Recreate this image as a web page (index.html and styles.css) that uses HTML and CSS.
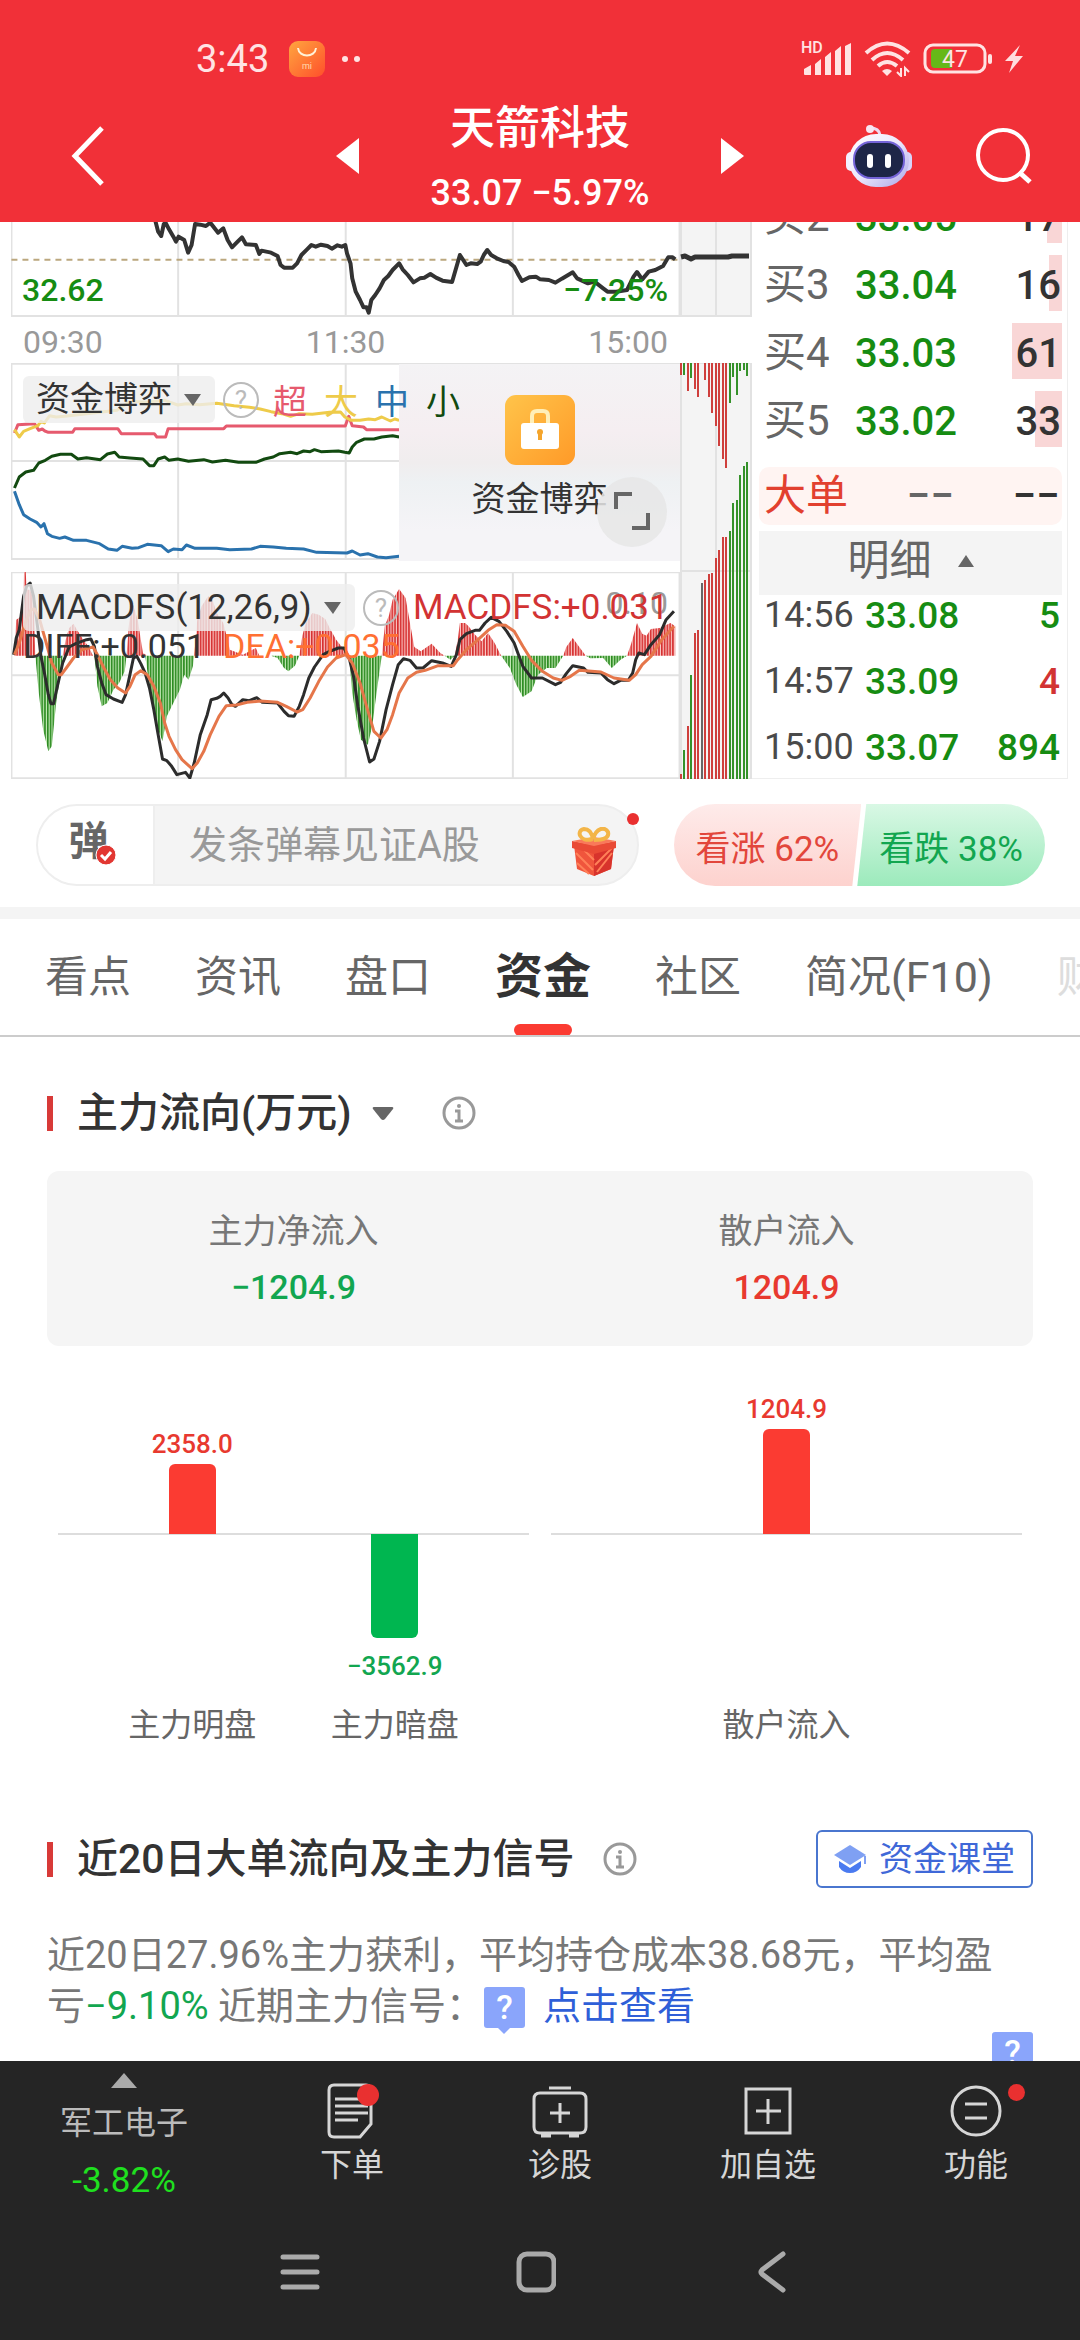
FILE: index.html
```html
<!DOCTYPE html>
<html lang="zh-CN">

<head>
    <meta charset="UTF-8">
    <meta name="viewport" content="width=device-width, initial-scale=1.0">
    <title>天箭科技 33.07</title>
    <link rel="stylesheet" href="styles.css">
</head>

<body>
    <!-- Header Section -->
    <header class="top">
        <div class="status-bar">
            <div class="status-left">
                <span class="clock">3:43</span>
                <svg class="app-icon" width="36" height="36" viewBox="0 0 36 36">
                    <defs>
                        <linearGradient id="mi" x1="0" y1="0" x2="1" y2="1">
                            <stop offset="0" stop-color="#ffa63f" />
                            <stop offset="1" stop-color="#ff4f2b" />
                        </linearGradient>
                    </defs>
                    <rect width="36" height="36" rx="9" fill="url(#mi)" />
                    <path d="M9 7c1 10 17 10 18 0" fill="none" stroke="#fff2d8" stroke-width="2" />
                    <text x="18" y="28" text-anchor="middle" font-size="9" fill="#ffdcae">mi</text>
                </svg>
                <svg width="20" height="8" viewBox="0 0 20 8" fill="#ffe3e3">
                    <circle cx="4" cy="4" r="3" />
                    <circle cx="16" cy="4" r="3" />
                </svg>
            </div>
            <div class="status-right">
                <div class="signal">
                    <span class="hd">HD</span>
                    <svg width="50" height="34" viewBox="0 0 50 34" fill="#ffe3e3">
                        <path d="M1 27l7-4v10H2q-1 0-1-1zM12 22l6-5v16h-6zM22 15l6-5v23h-6zM32 9l6-5v29h-6zM42 4l6-3v32h-6z" />
                    </svg>
                </div>
                <svg width="48" height="36" viewBox="0 0 48 36" fill="none" stroke="#ffe3e3" stroke-width="4">
                    <path d="M2 12Q23-7 45 12M8 19Q23 5 39 19M14 25Q23 17 33 25" />
                    <path d="M18 30q5-4 10 0l-5 5z" fill="#ffe3e3" stroke="none" />
                    <path d="M37 27v8l-4-4M41 35v-8l4 4" stroke-width="2" />
                </svg>
                <svg width="70" height="32" viewBox="0 0 70 32">
                    <rect x="2" y="2" width="60" height="27" rx="8" fill="none" stroke="#ffe3e3" stroke-width="3" />
                    <path d="M12 6h17v19H12q-4 0-4-4V10q0-4 4-4z" fill="#66b818" />
                    <rect x="65" y="11" width="4" height="10" rx="2" fill="#ffe3e3" />
                    <text x="32" y="24" text-anchor="middle" font-size="23" fill="#ffe3e3">47</text>
                </svg>
                <svg width="20" height="30" viewBox="0 0 20 30">
                    <path d="M16 1L1 17h8L5 29 19 12h-8z" fill="#ffdede" />
                </svg>
            </div>
        </div>
        <div class="title-bar">
            <button class="icon-btn back" aria-label="返回">
                <svg width="36" height="62" viewBox="0 0 36 62"><path d="M32 3L5 31l27 28" fill="none" stroke="#fff" stroke-width="5" /></svg>
            </button>
            <div class="stock">
                <button class="icon-btn" aria-label="上一只">
                    <svg width="23" height="36" viewBox="0 0 23 36"><path d="M23 0v36L0 18z" fill="#fff" /></svg>
                </button>
                <div class="stock-name">
                    <h1>天箭科技</h1>
                    <p>33.07 −5.97%</p>
                </div>
                <button class="icon-btn" aria-label="下一只">
                    <svg width="23" height="36" viewBox="0 0 23 36"><path d="M0 0v36l23-18z" fill="#fff" /></svg>
                </button>
            </div>
            <div class="title-tools">
                <button class="icon-btn" aria-label="智能助手">
                    <svg width="66" height="64" viewBox="0 0 66 64">
                        <defs>
                            <linearGradient id="shell" x1="0" y1="0" x2="1" y2="1">
                                <stop offset="0" stop-color="#ffffff" />
                                <stop offset="0.500" stop-color="#ece7fc" />
                                <stop offset="1" stop-color="#a9a6e8" />
                            </linearGradient>
                        </defs>
                        <path d="M24 4q9 0 10 7" fill="none" stroke="#efd9f0" stroke-width="3" />
                        <circle cx="24" cy="5" r="4" fill="#f7e6f2" />
                        <rect x="0" y="28" width="10" height="19" rx="5" fill="#f2f0ff" />
                        <rect x="56" y="28" width="10" height="19" rx="5" fill="#d8d5fa" />
                        <rect x="3" y="10" width="60" height="53" rx="27" fill="url(#shell)" />
                        <rect x="8" y="18" width="50" height="36" rx="17" fill="#1d2647" stroke="#7464d8" stroke-width="2" />
                        <rect x="21" y="30" width="6" height="14" rx="3" fill="#fff" />
                        <rect x="39" y="30" width="6" height="14" rx="3" fill="#fff" />
                    </svg>
                </button>
                <button class="icon-btn" aria-label="搜索">
                    <svg width="56" height="56" viewBox="0 0 56 56" fill="none" stroke="#fff" stroke-width="4">
                        <circle cx="27" cy="27" r="25" />
                        <path d="M43 44l11 10" stroke-width="5" />
                    </svg>
                </button>
            </div>
        </div>
    </header>

    <main class="content">
        <!-- Quote Section -->
        <section class="quote">
            <div class="charts">
                <div class="pane pane-price">
                    <svg class="plot" viewBox="26 6 1541 285" preserveAspectRatio="none">
                        <path class="grid" d="M27 0V288H1566V0M411 0V288M797 0V288M1182 0V288" />
                        <path class="ref-line" d="M27 119H1566" />
                        <path class="line line-price" d="M358 0L365 35 372 48 378 12 382 8 390 28 400 50 406 65 412 50 425 60 434 98 442 75 450 12 462 14 475 18 485 8 495 25 503 38 515 25 525 60 535 82 548 65 558 52 567 73 590 75 598 102 603 92 625 98 640 108 647 135 655 143 675 143 685 130 695 105 708 88 718 75 728 80 740 74 755 78 765 86 778 76 788 80 796 75 800 100 808 130 812 175 820 215 830 240 838 262 845 262 850 278 856 240 865 225 875 205 885 180 895 168 905 150 920 130 928 148 940 165 953 187 968 175 978 173 992 162 1005 173 1020 182 1042 186 1050 150 1060 105 1075 135 1085 130 1100 132 1108 125 1115 105 1123 90 1132 105 1145 115 1160 123 1172 126 1185 140 1195 165 1203 183 1220 172 1235 170 1245 178 1265 180 1280 188 1295 176 1320 157 1330 175 1355 190 1370 185 1390 205 1400 215 1420 215 1445 210 1460 170 1468 156 1480 178 1495 155 1510 150 1528 138 1540 112 1550 112 1556 118" />
                    </svg>
                    <div class="price-range"><span>32.62</span><span>−7.25%</span></div>
                </div>
                <div class="time-axis"><span>09:30</span><span>11:30</span><span>15:00</span></div>
                <div class="pane pane-game">
                    <svg class="plot" viewBox="26 430 1541 591" preserveAspectRatio="none">
                        <path class="grid" d="M27 432H1566V1018H27ZM411 430V1018M797 430V1018M27 724H920" />
                        <path class="line line-xl" d="M34 640L42 615 80 612 90 632 98 628 104 634 112 638 168 638 173 627 272 627 280 642 356 642 362 652 382 652 388 627 516 627 522 619 796 619 804 590 812 618 838 622 845 630 920 630" />
                        <path class="line line-l" d="M34 630L45 652 55 635 70 627 88 618 95 605 103 610 115 588 130 592 150 590 200 582 270 572 300 545 340 548 380 542 410 556 430 552 460 555 500 551 540 558 575 563 600 568 625 576 650 582 670 590 690 582 720 584 760 578 785 577 795 592 810 602 830 602 850 598 865 600 880 592 900 604 910 598 920 602" />
                        <path class="line line-s" d="M34 805L45 772 60 757 78 752 90 730 105 722 120 710 140 704 165 704 180 718 200 714 232 720 248 703 265 698 275 712 300 715 330 718 345 738 355 738 365 718 380 712 390 722 410 718 435 725 470 720 490 727 520 722 550 728 590 728 610 718 630 712 645 702 670 698 685 702 700 694 715 696 725 690 740 696 780 694 795 698 805 700 812 682 822 668 840 658 862 658 880 652 905 648 920 652" />
                        <path class="line line-m" d="M34 815L45 855 55 885 70 898 85 908 95 922 102 912 110 942 120 950 138 956 150 952 170 962 200 962 230 972 250 988 270 992 282 980 305 986 320 984 340 974 372 978 388 996 400 988 420 990 430 976 450 986 500 986 530 990 580 988 600 980 630 982 660 986 700 988 730 998 800 1000 812 994 830 1006 848 1002 870 1012 890 1014 920 1010" />
                    </svg>
                    <div class="locked">
                        <svg width="70" height="70" viewBox="0 0 70 70">
                            <defs>
                                <linearGradient id="lock" x1="0" y1="0" x2="1" y2="1">
                                    <stop offset="0" stop-color="#ffc44a" />
                                    <stop offset="1" stop-color="#ff9a28" />
                                </linearGradient>
                            </defs>
                            <rect width="70" height="70" rx="11" fill="url(#lock)" />
                            <path d="M27 28v-7q0-5 5-5h6q5 0 5 5v7" fill="none" stroke="#ffefb8" stroke-width="4" />
                            <rect x="16" y="28" width="38" height="26" rx="3" fill="#fff" />
                            <circle cx="35" cy="37" r="3" fill="#f5a52c" />
                            <path d="M33 37h4v8h-4z" fill="#f5a52c" />
                        </svg>
                        <span>资金博弈</span>
                    </div>
                    <div class="legend">
                        <label class="picker">
                            <select aria-label="指标"><option>资金博弈</option></select>
                            <svg width="17" height="12" viewBox="0 0 17 12"><path d="M0 0h17L9 12z" fill="#666" /></svg>
                        </label>
                        <button class="help" aria-label="说明">?</button>
                        <span class="xl">超</span><span class="l">大</span><span class="m">中</span><span class="s">小</span>
                    </div>
                    <button class="expand" aria-label="全屏">
                        <svg width="36" height="46" viewBox="0 0 36 46" fill="none" stroke="#666" stroke-width="4"><path d="M2 20V5h16M34 24v15H18" /></svg>
                    </button>
                </div>
                <div class="pane pane-macd">
                    <svg class="plot" viewBox="26 37 1541 621" preserveAspectRatio="none">
                        <defs>
                            <pattern id="up" width="6.400" height="700" patternUnits="userSpaceOnUse">
                                <rect width="6.400" height="700" fill="#fbc9c6" /><rect width="3.800" height="700" fill="#d62f2f" />
                            </pattern>
                            <pattern id="down" width="6.400" height="700" patternUnits="userSpaceOnUse">
                                <rect width="6.400" height="700" fill="#c4eab6" /><rect width="3.800" height="700" fill="#2b8a20" />
                            </pattern>
                        </defs>
                        <path class="grid" d="M27 38H1566V656H27ZM411 37V656M797 37V656M1182 37V656M27 347H1566" />
                        <path fill="url(#up)" d="M34 288L38 180 50 170 55 120 56 37H60L62 90 70 90 78 120 82 288ZM145 288L152 240 160 205 170 192 178 210 190 235 205 262 215 288ZM292 288L298 190 306 130 318 180 325 240 330 280 340 288ZM448 288L455 180 465 140 480 110 490 120 500 160 515 190 525 240 530 270 560 285 590 265 598 288ZM690 288L697 228 705 190 720 160 735 165 750 178 760 205 775 240 790 265 800 288ZM880 288L887 200 897 165 905 120 920 88 935 115 945 190 955 262 970 275 995 252 1015 280 1025 288ZM1048 288L1055 240 1060 190 1072 190 1080 200 1095 225 1110 245 1125 220 1140 250 1155 288ZM1298 288L1305 262 1320 235 1335 262 1350 288ZM1445 288L1455 250 1468 190 1480 222 1490 228 1500 208 1520 205 1545 190 1556 200V288Z" />
                        <path fill="url(#down)" d="M82 288L90 400 100 510 112 575 120 560 130 430 140 345 145 288ZM218 288L225 380 235 440 248 430 262 390 275 370 288 335 292 288ZM335 288L345 380 355 440 365 510 375 545 385 470 400 430 415 390 425 345 435 360 445 320 448 288ZM625 288L640 295 655 325 665 335 680 318 690 288ZM805 288L812 400 822 480 832 540 848 555 858 500 868 400 880 288ZM1025 288L1038 300 1048 288ZM1155 288L1175 325 1190 375 1205 412 1225 395 1240 345 1260 325 1280 325 1298 288ZM1350 288L1360 296 1390 295 1410 325 1430 300 1445 288Z" />
                        <path class="line line-diff" d="M32 285L38 235 45 210 55 110 62 80 70 70 78 110 88 210 95 290 103 340 112 405 118 432 124 432 132 385 145 310 160 262 175 252 200 240 210 238 218 260 225 320 235 370 245 405 262 418 282 428 290 405 300 345 308 295 316 290 325 312 335 340 345 385 355 450 365 525 375 598 385 603 395 618 408 645 428 638 438 655 448 610 462 525 478 465 487 420 500 416 508 410 516 400 526 415 535 435 543 440 560 420 575 423 592 414 605 428 640 430 655 455 665 468 678 470 690 440 700 405 712 355 725 322 745 285 760 275 780 265 793 265 805 295 815 350 825 440 838 535 852 607 862 598 875 545 890 450 905 375 918 315 930 297 945 302 960 325 975 325 995 303 1020 310 1040 320 1052 285 1060 240 1075 222 1095 212 1105 212 1118 190 1132 173 1150 185 1168 215 1185 250 1195 285 1205 320 1225 355 1250 355 1280 375 1292 368 1305 342 1320 318 1345 325 1355 338 1385 340 1400 360 1415 372 1430 362 1448 362 1458 340 1465 300 1472 280 1485 285 1500 255 1520 225 1535 180 1553 155" />
                        <path class="line line-dea" d="M34 285L45 250 60 185 72 150 80 148 92 180 105 240 120 310 135 345 142 345 155 322 170 295 190 270 215 262 225 285 240 325 255 360 272 385 290 400 300 380 312 345 325 333 340 345 355 380 370 430 380 490 390 530 405 570 420 600 443 627 455 610 470 575 485 525 505 470 522 438 545 436 570 428 600 424 640 428 660 440 685 457 698 450 715 415 735 365 755 322 775 295 797 285 812 310 830 370 845 440 862 515 878 535 892 510 905 465 920 400 940 355 960 338 980 332 1010 318 1045 318 1055 300 1075 270 1100 242 1125 212 1145 195 1165 197 1185 215 1205 260 1225 302 1250 335 1275 355 1295 362 1315 350 1335 332 1385 337 1415 355 1450 362 1465 345 1480 315 1500 290 1525 240 1553 200" />
                    </svg>
                    <span class="scale-max">0.10</span>
                    <div class="legend">
                        <label class="picker">
                            <select aria-label="指标"><option>MACDFS(12,26,9)</option></select>
                            <svg width="17" height="12" viewBox="0 0 17 12"><path d="M0 0h17L9 12z" fill="#666" /></svg>
                        </label>
                        <button class="help" aria-label="说明">?</button>
                        <span class="macd">MACDFS:+0.031</span>
                    </div>
                    <div class="legend-sub"><span>DIFF:+0.051</span><span class="dea">DEA:+0.035</span></div>
                </div>
            </div>

            <!-- Call auction strip -->
            <div class="auction">
                <svg class="auction-price" viewBox="680 222 72 95" preserveAspectRatio="none">
                    <path class="grid" d="M681 222V316H751V222M716 222V316" />
                    <path class="line line-auction" d="M681 257L685 256 691 259 695 257 728 257 732 256 749 256" />
                </svg>
                <svg class="auction-volume" viewBox="680 363 72 416" preserveAspectRatio="none">
                    <path class="grid" d="M681 363H751V779H681ZM716 363V779M681 571H751" />
                    <g class="bars">
                        <path class="up" d="M681 363v12M688 363v28M695 363v26M698 363v34M705 363v17M709 363v34M712 363v50M716 363v63M719 363v83M723 363v96M726 363v105" />
                        <path class="down" d="M684 363v12M691 363v15M730 363v40M733 363v14M737 363v32M740 363v8M744 363v7M747 363v13" />
                        <path class="up" d="M681 779v-5M688 779v-53M695 779v-146M698 779v-149M705 779v-199M709 779v-205M712 779v-206M716 779v-221M719 779v-229M723 779v-242M726 779v-242" />
                        <path class="flat" d="M702 779v-196" />
                        <path class="down" d="M684 779v-29M691 779v-104M730 779v-248M733 779v-276M737 779v-279M740 779v-304M744 779v-313M747 779v-317" />
                    </g>
                </svg>
            </div>

            <!-- Order book -->
            <div class="book">
                <div class="levels">
                    <table>
                        <tr><th>买2</th><td class="price">33.05</td><td class="vol"><span class="depth" style="width: 15px"></span><b>17</b></td></tr>
                        <tr><th>买3</th><td class="price">33.04</td><td class="vol"><span class="depth" style="width: 13px"></span><b>16</b></td></tr>
                        <tr><th>买4</th><td class="price">33.03</td><td class="vol"><span class="depth" style="width: 50px"></span><b>61</b></td></tr>
                        <tr><th>买5</th><td class="price">33.02</td><td class="vol"><span class="depth" style="width: 27px"></span><b>33</b></td></tr>
                    </table>
                </div>
                <div class="big-order"><span>大单</span><span class="dash">−−</span><span class="dash dark">−−</span></div>
                <button class="detail">明细
                    <svg width="16" height="12" viewBox="0 0 16 12"><path d="M8 0l8 12H0z" fill="#666" /></svg>
                </button>
                <div class="trades">
                    <table>
                        <tr><th>14:56</th><td>33.08</td><td class="vol">5</td></tr>
                        <tr><th>14:57</th><td>33.09</td><td class="vol rise">4</td></tr>
                        <tr><th>15:00</th><td>33.07</td><td class="vol">894</td></tr>
                    </table>
                </div>
            </div>
        </section>

        <!-- Comment bar and vote -->
        <section class="danmu">
            <div class="danmu-box">
                <button class="danmu-toggle" aria-label="弹幕开关">弹
                    <svg class="danmu-check" width="23" height="23" viewBox="0 0 23 23">
                        <circle cx="11" cy="11" r="10" fill="#e23732" stroke="#fff" stroke-width="1" />
                        <path d="M6 11l4 4 6-7" fill="none" stroke="#fff" stroke-width="3" />
                    </svg>
                </button>
                <input type="text" placeholder="发条弹幕见证A股" aria-label="弹幕">
                <button class="gift" aria-label="礼物">
                    <svg width="46" height="50" viewBox="0 0 46 50">
                        <path d="M3 18l20 6 20-6-3 24-17 7L6 42z" fill="#f0553c" />
                        <path d="M23 24l20-6-3 24-17 7z" fill="#d8332c" />
                        <path d="M5 26l17 17M6 36l12 11M12 22l11 11M41 26L26 45M42 20L24 38" stroke="#ff8058" stroke-width="2" />
                        <path d="M1 14l22 4 22-4v7l-22 6-22-6z" fill="#e94a35" />
                        <path d="M1 14l22-4 22 4-22 5z" fill="#f9795a" />
                        <path d="M22 12C8 16 5 3 13 2q7 0 9 10C25 1 34-1 37 5q2 8-14 8" fill="none" stroke="#f3b548" stroke-width="4" />
                    </svg>
                </button>
                <span class="dot"></span>
            </div>
            <div class="vote">
                <button class="vote-up">看涨 62%</button>
                <button class="vote-down">看跌 38%</button>
            </div>
        </section>

        <!-- Tabs -->
        <nav class="tabs">
            <a href="#">看点</a>
            <a href="#">资讯</a>
            <a href="#">盘口</a>
            <a href="#" class="active">资金</a>
            <a href="#">社区</a>
            <a href="#">简况(F10)</a>
            <a href="#" class="fade">财务</a>
        </nav>

        <!-- Main capital flow -->
        <section class="flow">
            <div class="section-title">
                <h2><select aria-label="主力流向"><option>主力流向(万元)</option></select></h2>
                <svg class="caret" width="22" height="13" viewBox="0 0 22 13"><path d="M2 0h18q2 0 1 2L13 12q-2 2-4 0L1 2Q0 0 2 0z" fill="#666" /></svg>
                <button class="icon-btn info" aria-label="说明">
                    <svg width="34" height="34" viewBox="0 0 34 34" fill="none" stroke="#999" stroke-width="3">
                        <circle cx="17" cy="17" r="15" />
                        <path d="M13 15h4v10M13 25h8" />
                        <circle cx="17" cy="10" r="2" fill="#999" stroke="none" />
                    </svg>
                </button>
            </div>
            <div class="summary">
                <div><span>主力净流入</span><strong class="fall">−1204.9</strong></div>
                <div><span>散户流入</span><strong class="rise">1204.9</strong></div>
            </div>
            <div class="bar-charts">
                <div class="bar-chart">
                    <div class="bar-col">
                        <div class="half-up"><span class="rise">2358.0</span><i class="bar bar-up" style="height: 70px"></i></div>
                        <div class="half-down"></div>
                        <div class="bar-name">主力明盘</div>
                    </div>
                    <div class="bar-col">
                        <div class="half-up"></div>
                        <div class="half-down"><i class="bar bar-down" style="height: 104px"></i><span class="fall">−3562.9</span></div>
                        <div class="bar-name">主力暗盘</div>
                    </div>
                </div>
                <div class="bar-chart">
                    <div class="bar-col">
                        <div class="half-up"><span class="rise">1204.9</span><i class="bar bar-up" style="height: 105px"></i></div>
                        <div class="half-down"></div>
                        <div class="bar-name">散户流入</div>
                    </div>
                </div>
            </div>
        </section>

        <!-- 20-day signal -->
        <section class="signal-section">
            <div class="section-title">
                <h2>近20日大单流向及主力信号</h2>
                <button class="icon-btn info-near" aria-label="说明">
                    <svg width="34" height="34" viewBox="0 0 34 34" fill="none" stroke="#999" stroke-width="3">
                        <circle cx="17" cy="17" r="15" />
                        <path d="M13 15h4v10M13 25h8" />
                        <circle cx="17" cy="10" r="2" fill="#999" stroke="none" />
                    </svg>
                </button>
                <button class="lesson">
                    <svg width="34" height="30" viewBox="0 0 34 30">
                        <path d="M17 1l16 10-16 10L1 11z" fill="#7fa0f3" />
                        <path d="M6 17l11 7 11-7v6q-4 6-11 6T6 23z" fill="#4a7af0" />
                        <path d="M32 12v8" stroke="#7fa0f3" stroke-width="2" />
                    </svg>
                    资金课堂
                </button>
            </div>
            <p class="signal-text">近20日27.96%主力获利，平均持仓成本38.68元，平均盈亏<em>−9.10%</em> 近期主力信号：<span class="tag">?</span><a href="#">点击查看</a></p>
            <div class="signal-chart"><span class="tag">?</span></div>
        </section>
    </main>

    <!-- Bottom toolbar -->
    <footer class="bottom">
        <div class="toolbar">
            <button class="index">
                <svg width="26" height="15" viewBox="0 0 26 15"><path d="M13 0l13 15H0z" fill="#aaa" /></svg>
                <span>军工电子</span>
                <span class="index-change">-3.82%</span>
            </button>
            <button class="tool">
                <svg width="56" height="56" viewBox="0 0 56 56" fill="none" stroke="#d6d6d6" stroke-width="3">
                    <path d="M10 2h32q5 0 5 5v34L36 54H10q-5 0-5-5V7q0-5 5-5z" />
                    <path d="M11 16h28M11 23h33M11 30h33M11 37h23" />
                    <circle cx="44" cy="12" r="11" fill="#e93030" stroke="none" />
                </svg>
                下单
            </button>
            <button class="tool">
                <svg width="56" height="56" viewBox="0 0 56 56" fill="none" stroke="#d6d6d6" stroke-width="3">
                    <path d="M17 5h22M8 10h40q6 0 6 6v28q0 6-6 6H8q-6 0-6-6V16q0-6 6-6zM9 53h10M37 53h10M28 20v20M18 30h20" />
                </svg>
                诊股
            </button>
            <button class="tool">
                <svg width="56" height="56" viewBox="0 0 56 56" fill="none" stroke="#d6d6d6" stroke-width="3">
                    <path d="M6 6h44v44H6zM28 16v25M16 28h25" />
                </svg>
                加自选
            </button>
            <button class="tool">
                <svg width="56" height="56" viewBox="0 0 56 56" fill="none" stroke="#d6d6d6" stroke-width="3">
                    <circle cx="28" cy="28" r="24" />
                    <path d="M17 21h22M17 35h22" />
                </svg>
                功能
                <span class="tool-dot"></span>
            </button>
        </div>
        <div class="system-nav">
            <button class="icon-btn" aria-label="菜单">
                <svg width="40" height="42" viewBox="0 0 40 42" stroke="#aaa" stroke-width="5" stroke-linecap="round"><path d="M3 6h34M3 21h34M3 36h34" /></svg>
            </button>
            <button class="icon-btn" aria-label="主页">
                <svg width="40" height="42" viewBox="0 0 40 42"><rect x="3" y="3" width="35" height="36" rx="8" fill="none" stroke="#aaa" stroke-width="5" /></svg>
            </button>
            <button class="icon-btn" aria-label="后退">
                <svg width="40" height="42" viewBox="0 0 40 42"><path d="M31 3L10 19q-2 2 0 4l21 16" fill="none" stroke="#aaa" stroke-width="5" stroke-linecap="round" /></svg>
            </button>
        </div>
    </footer>
</body>

</html>
```

FILE: styles.css
```css
/* Base */
* {
    box-sizing: border-box;
}

body {
    margin: 0;
    height: 100vh;
    display: flex;
    flex-direction: column;
    overflow: hidden;
    background-color: #fff;
    color: #333;
    font-family: Roboto, "Noto Sans CJK SC", sans-serif;
}

h1,
h2,
p {
    margin: 0;
    font-weight: 500;
}

button,
select,
input {
    margin: 0;
    padding: 0;
    border: none;
    background: none;
    color: inherit;
    font: inherit;
}

select {
    appearance: none;
}

a {
    text-decoration: none;
}

svg {
    display: block;
    flex: none;
}

.icon-btn {
    display: flex;
}

.rise {
    color: #e8392f;
}

.fall {
    color: #12a650;
}

/* Header Section */
.top {
    flex: none;
    background-color: #f13038;
    color: #fff;
}

.status-bar {
    display: flex;
    justify-content: space-between;
    align-items: center;
    height: 88px;
    padding: 30px 56px 0 196px;
    color: #ffe3e3;
}

.status-left,
.status-right {
    display: flex;
    align-items: center;
}

.clock {
    font-size: 38px;
    line-height: 40px;
}

.app-icon {
    margin: 0 16px 0 20px;
}

.status-right {
    gap: 11px;
}

.signal {
    position: relative;
}

.hd {
    position: absolute;
    left: -2px;
    top: -3px;
    font-size: 16px;
    font-weight: 500;
    line-height: 18px;
}

.title-bar {
    display: grid;
    grid-template-columns: 1fr auto 1fr;
    align-items: center;
    height: 134px;
    padding: 0 48px 0 70px;
}

.stock {
    display: flex;
    align-items: center;
    gap: 72px;
    margin-left: -22px;
}

.stock-name {
    padding-top: 8px;
    text-align: center;
}

.stock-name h1 {
    font-size: 45px;
    line-height: 66px;
}

.stock-name p {
    font-size: 36px;
    line-height: 62px;
    white-space: nowrap;
}

.title-tools {
    display: flex;
    justify-content: flex-end;
    align-items: center;
    gap: 64px;
}

/* Content */
.content {
    flex: 1;
    min-height: 0;
    overflow: hidden;
}

/* Quote Section */
.quote {
    display: grid;
    grid-template-columns: 669fr 72fr 316fr;
    padding: 0 12px 0 11px;
}

.pane {
    position: relative;
}

.pane-price {
    height: 95px;
}

.pane-game {
    height: 197px;
    margin-bottom: 12px;
}

.pane-macd {
    height: 207px;
}

.plot {
    width: 100%;
    height: 100%;
}

.grid {
    fill: none;
    stroke: #e2e2e2;
    stroke-width: 2px;
    vector-effect: non-scaling-stroke;
}

.ref-line {
    stroke: #bba77e;
    stroke-width: 2px;
    stroke-dasharray: 6 5;
    vector-effect: non-scaling-stroke;
}

.line {
    fill: none;
    stroke-width: 3px;
    stroke-linejoin: round;
    vector-effect: non-scaling-stroke;
}

.line-price {
    stroke: #333;
    stroke-width: 4px;
}

.line-xl {
    stroke: #e65a6e;
}

.line-l {
    stroke: #eecb4a;
}

.line-m {
    stroke: #2a72ad;
}

.line-s {
    stroke: #124a10;
}

.line-diff {
    stroke: #2c2c2c;
}

.line-dea {
    stroke: #e5764a;
}

.line-auction {
    stroke: #333;
    stroke-width: 5px;
}

.price-range {
    position: absolute;
    left: 11px;
    right: 12px;
    bottom: 8px;
    display: flex;
    justify-content: space-between;
    color: #168c12;
    font-size: 32px;
    font-weight: 500;
    line-height: 38px;
}

.time-axis {
    display: flex;
    justify-content: space-between;
    align-items: center;
    height: 46px;
    padding: 4px 12px 0;
    color: #999;
    font-size: 32px;
}

.legend {
    position: absolute;
    left: 12px;
    top: 12px;
    display: flex;
    align-items: center;
    font-size: 34px;
    white-space: nowrap;
}

.pane-macd .legend {
    font-size: 35px;
}

.picker {
    display: flex;
    align-items: center;
    gap: 12px;
    height: 47px;
    padding: 0 14px 0 13px;
    border-radius: 6px;
    background-color: rgba(238, 238, 238, 0.8);
}

.picker select {
    height: 47px;
    line-height: 47px;
}

.help {
    width: 36px;
    height: 36px;
    margin: 0 14px 0 8px;
    border: 2px solid #bbb;
    border-radius: 50%;
    color: #bbb;
    font-size: 26px;
    line-height: 32px;
    text-align: center;
}

.xl,
.l,
.m {
    margin-right: 17px;
}

.xl {
    color: #e65a6e;
}

.l {
    color: #eecb4a;
}

.m {
    color: #2a72ad;
}

.s {
    color: #124a10;
}

.macd {
    color: #d23333;
}

.legend-sub {
    position: absolute;
    left: 12px;
    top: 54px;
    display: flex;
    gap: 18px;
    font-size: 34px;
    line-height: 40px;
}

.dea {
    color: #ff7033;
}

.scale-max {
    position: absolute;
    right: 12px;
    top: 12px;
    color: #999;
    font-size: 32px;
    line-height: 38px;
}

.locked {
    position: absolute;
    right: 0;
    top: 1px;
    width: 42%;
    height: 197px;
    display: flex;
    flex-direction: column;
    align-items: center;
    gap: 9px;
    padding-top: 31px;
    background: linear-gradient(#f4f3f5, #f5eef1 34%, #f0edee 50%, #eef1f3 60%, #f5f4f7 85%);
    font-size: 34px;
    line-height: 50px;
}

.expand {
    position: absolute;
    right: 13px;
    bottom: 13px;
    display: flex;
    justify-content: center;
    align-items: center;
    width: 70px;
    height: 70px;
    border-radius: 50%;
    background-color: rgba(230, 230, 230, 0.85);
}

/* Call auction strip */
.auction {
    display: flex;
    flex-direction: column;
    gap: 46px;
}

.auction svg {
    width: 100%;
    background-color: #f4f4f4;
}

.auction-price {
    height: 95px;
}

.auction-volume {
    height: 416px;
}

.bars {
    fill: none;
    stroke-width: 2px;
}

.bars .up {
    stroke: #cf3f3c;
}

.bars .down {
    stroke: #35922a;
}

.bars .flat {
    stroke: #666;
}

/* Order book */
.book {
    display: flex;
    flex-direction: column;
    height: 557px;
    padding: 0 5px 0 7px;
    border-right: 1px solid #eee;
    border-bottom: 1px solid #eee;
}

.book table {
    width: 100%;
    flex: none;
    border-collapse: collapse;
    table-layout: fixed;
}

.book th {
    padding: 0 0 0 5px;
    color: #666;
    font-weight: 400;
    text-align: left;
}

.book td {
    padding: 0;
    color: #168c12;
    font-weight: 500;
}

.levels,
.trades {
    display: flex;
    flex-direction: column;
    justify-content: flex-end;
    overflow: hidden;
}

.levels {
    height: 233px;
    font-size: 40px;
}

.levels tr {
    height: 68px;
}

.levels th {
    width: 96px;
    font-size: 42px;
    line-height: 56px;
}

.levels .vol {
    position: relative;
    padding-right: 1px;
    color: #333;
    text-align: right;
}

.levels b {
    position: relative;
    font-weight: 500;
}

.depth {
    position: absolute;
    right: 0;
    top: 4px;
    height: 56px;
    background-color: #f9d6d6;
}

.big-order {
    display: flex;
    justify-content: space-between;
    align-items: center;
    height: 58px;
    margin: 12px 0 6px;
    padding: 0 2px 0 5px;
    border-radius: 10px;
    background-color: #fff4f2;
    color: #e2402f;
    font-size: 42px;
    line-height: 58px;
}

.dash {
    color: #666;
    font-weight: 500;
}

.dash.dark {
    color: #333;
}

.detail {
    display: flex;
    justify-content: center;
    align-items: center;
    gap: 26px;
    height: 64px;
    flex: none;
    background-color: #f4f4f4;
    color: #666;
    font-size: 42px;
    line-height: 58px;
    padding-bottom: 4px;
}

.trades {
    flex: 1;
    margin-bottom: -2px;
    font-size: 37px;
}

.trades tr {
    height: 66px;
}

.trades th {
    width: 106px;
    color: #4a4a4a;
    font-size: 36px;
}

.trades .vol {
    padding-right: 2px;
    text-align: right;
}

.trades .vol.rise {
    color: #d23333;
}

/* Comment bar and vote */
.danmu {
    display: flex;
    gap: 35px;
    padding: 25px 35px 21px 36px;
    border-bottom: 12px solid #f4f4f4;
}

.danmu-box {
    position: relative;
    flex: 601;
    min-width: 0;
    display: flex;
    height: 82px;
    border: 2px solid #eee;
    border-radius: 41px;
    background-color: #f4f4f4;
}

.danmu-toggle {
    position: relative;
    width: 117px;
    flex: none;
    border-right: 2px solid #eee;
    border-radius: 41px 0 0 41px;
    background-color: #fff;
    color: #666;
    font-size: 40px;
    font-weight: 700;
    line-height: 70px;
    padding: 0 14px 6px 0;
    text-align: center;
}

.danmu-check {
    position: absolute;
    left: 57px;
    bottom: 17px;
}

.danmu-box input {
    flex: 1;
    min-width: 0;
    padding-left: 34px;
    font-size: 38px;
}

.danmu-box input::placeholder {
    color: #999;
    opacity: 1;
}

.gift {
    display: flex;
    align-items: center;
    margin-right: 20px;
    padding-top: 14px;
}

.dot {
    position: absolute;
    right: -2px;
    top: 7px;
    width: 12px;
    height: 12px;
    border-radius: 50%;
    background-color: #e93030;
}

.vote {
    flex: 373;
    min-width: 0;
    display: flex;
    height: 82px;
    border-radius: 41px;
    overflow: hidden;
    font-size: 35px;
}

.vote button {
    flex: 1;
    white-space: nowrap;
}

.vote-up {
    margin-right: -4px;
    background: linear-gradient(#feebea, #fdd2ce);
    clip-path: polygon(0 0, 100% 0, calc(100% - 9px) 100%, 0 100%);
    color: #e2463b;
}

.vote-down {
    background: linear-gradient(#d9f8e5, #9ceabc);
    clip-path: polygon(9px 0, 100% 0, 100% 100%, 0 100%);
    color: #12a650;
}

/* Tabs */
.tabs {
    display: flex;
    align-items: center;
    gap: 64px;
    height: 118px;
    padding-left: 45px;
    overflow: hidden;
    border-bottom: 2px solid #ccc;
    white-space: nowrap;
}

.tabs a {
    flex: none;
    color: #666;
    font-size: 43px;
    line-height: 118px;
}

.tabs .active {
    position: relative;
    color: #333;
    font-size: 48px;
    font-weight: 700;
}

.tabs .active::after {
    content: "";
    position: absolute;
    left: 50%;
    bottom: 0;
    width: 58px;
    height: 12px;
    margin-left: -29px;
    border-radius: 6px;
    background-color: #fb3b32;
}

.tabs .fade {
    color: #ddd;
}

/* Section titles */
.section-title {
    display: flex;
    align-items: center;
    height: 60px;
    white-space: nowrap;
}

.section-title::before {
    content: "";
    width: 6px;
    height: 35px;
    margin-right: 24px;
    background-color: #d83a38;
}

.section-title h2 {
    font-size: 41px;
    line-height: 60px;
}

.caret {
    margin-left: 20px;
}

.info {
    margin-left: 48px;
}

.info-near {
    margin-left: 28px;
}

/* Main capital flow */
.flow {
    padding: 46px 47px 0;
}

.summary {
    display: flex;
    margin-top: 28px;
    padding: 32px 0 31px;
    border-radius: 12px;
    background-color: #f5f5f5;
}

.summary div {
    flex: 1;
    display: flex;
    flex-direction: column;
    align-items: center;
    font-size: 34px;
    line-height: 56px;
}

.summary span {
    color: #777;
}

.summary strong {
    font-weight: 500;
}

.bar-charts {
    display: flex;
    gap: 22px;
    margin: 38px 11px 0;
}

.bar-chart {
    flex: 1;
    display: flex;
    padding: 0 33px;
    background: linear-gradient(#ddd, #ddd) 0 149px / 100% 2px no-repeat;
}

.bar-col {
    flex: 1;
    display: flex;
    flex-direction: column;
    font-size: 26px;
    font-weight: 500;
    line-height: 32px;
}

.half-up,
.half-down {
    display: flex;
    flex-direction: column;
    align-items: center;
}

.half-up {
    justify-content: flex-end;
    height: 150px;
    gap: 4px;
}

.half-down {
    height: 168px;
    gap: 12px;
}

.bar {
    width: 47px;
}

.bar-up {
    border-radius: 6px 6px 0 0;
    background-color: #fb3b32;
}

.bar-down {
    border-radius: 0 0 6px 6px;
    background-color: #00b650;
}

.bar-name {
    color: #666;
    font-size: 32px;
    font-weight: 400;
    line-height: 46px;
    text-align: center;
}

/* 20-day signal */
.signal-section {
    padding: 81px 47px 0;
}

.lesson {
    display: flex;
    align-items: center;
    gap: 12px;
    height: 58px;
    margin-left: auto;
    padding: 0 16px 0 15px;
    border: 2px solid #4a76cf;
    border-radius: 6px;
    color: #3f68d8;
    font-size: 34px;
    line-height: 50px;
}

.signal-text {
    margin-top: 41px;
    padding-right: 24px;
    color: #777;
    font-size: 38px;
    font-weight: 400;
    line-height: 51px;
}

.signal-text em {
    color: #12a650;
    font-style: normal;
}

.signal-text a {
    margin-left: 18px;
    color: #2f5fd8;
}

.tag {
    position: relative;
    display: inline-block;
    width: 41px;
    height: 41px;
    border-radius: 3px;
    background-color: #8aa5fb;
    color: #fff;
    font-size: 34px;
    font-weight: 500;
    line-height: 41px;
    text-align: center;
}

.tag::after {
    content: "";
    position: absolute;
    left: 14px;
    top: 41px;
    border: 6px solid transparent;
    border-top-color: #8aa5fb;
}

.signal-chart {
    display: flex;
    justify-content: flex-end;
}

/* Bottom toolbar */
.bottom {
    flex: none;
    background-color: #252525;
    color: #d6d6d6;
}

.toolbar {
    display: flex;
    height: 143px;
}

.toolbar button {
    display: flex;
    flex-direction: column;
    align-items: center;
    font-size: 32px;
    line-height: 46px;
}

.index {
    flex: 248;
    gap: 12px;
    padding-top: 12px;
    color: #bbb;
}

.index .index-change {
    color: #1fe01f;
    font-size: 35px;
}

.tool {
    position: relative;
    flex: 208;
    gap: 3px;
    padding-top: 22px;
}

.tool-dot {
    position: absolute;
    left: calc(50% + 32px);
    top: 23px;
    width: 17px;
    height: 17px;
    border-radius: 50%;
    background-color: #e93030;
}

.system-nav {
    display: flex;
    justify-content: center;
    align-items: center;
    gap: 196px;
    height: 136px;
    padding-right: 8px;
}
```
